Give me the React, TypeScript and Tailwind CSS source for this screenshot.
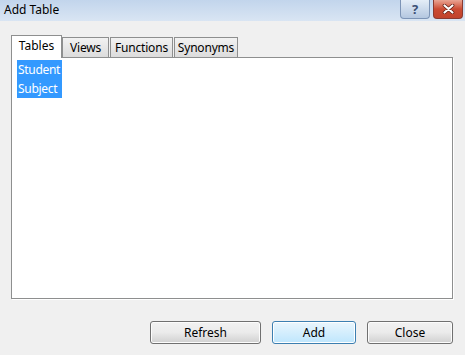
const font = { fontFamily: '"Noto Sans", "Open Sans", sans-serif' };

function TitleBar() {
  return (
    <div className="flex h-[21px] items-start justify-between bg-gradient-to-b from-[#c2d5ec] to-[#d9e5f3]">
      <div className="pl-[4px] pt-[3px] text-[12px] leading-[14px] text-black">Add Table</div>
      <div className="flex gap-[3px] pr-[2px]">
        <div className="flex h-[19px] w-[30px] items-center justify-center rounded-b-[4px] border border-t-0 border-[#7d94b6] bg-gradient-to-b from-[#e4edf7] to-[#b4c7e0] text-[13px] font-bold leading-none text-[#3b4f74]">
          ?
        </div>
        <div className="flex h-[19px] w-[30px] items-center justify-center rounded-b-[4px] border border-t-0 border-[#8a3a30] bg-gradient-to-b from-[#e9a493] via-[#cb4b33] to-[#c1432c]">
          <svg width="13" height="10" viewBox="0 0 13 10">
            <path d="M2.5 1.5 L10.5 8.5 M10.5 1.5 L2.5 8.5" stroke="#5a1a10" strokeWidth="3.6" strokeLinecap="round" />
            <path d="M2.5 1.5 L10.5 8.5 M10.5 1.5 L2.5 8.5" stroke="#ffffff" strokeWidth="2.2" strokeLinecap="round" />
          </svg>
        </div>
      </div>
    </div>
  );
}

function Tab({ label, active, w }: { label: string; active?: boolean; w: string }) {
  if (active) {
    return (
      <div
        className={`relative z-10 -mb-px flex h-[23px] ${w} items-start justify-center border border-b-0 border-[#8e8f8f] bg-white pt-[2px] text-[12px] leading-[16px]`}
      >
        {label}
      </div>
    );
  }
  return (
    <div
      className={`flex h-[20px] ${w} items-start justify-center border border-b-0 border-[#8e8f8f] bg-gradient-to-b from-[#f2f2f2] to-[#dcdcdc] pt-[2px] text-[12px] leading-[16px] tracking-[-0.2px]`}
    >
      {label}
    </div>
  );
}

function Btn({ label, primary, w }: { label: string; primary?: boolean; w: string }) {
  return (
    <button
      className={`h-[23px] ${w} rounded-[3px] border text-[12px] leading-none ${
        primary
          ? "border-[#3c7fb1] bg-gradient-to-b from-[#eaf6fd] to-[#bee6fd] shadow-[inset_0_0_0_1px_#ffffff]"
          : "border-[#707070] bg-gradient-to-b from-[#f2f2f2] via-[#ebebeb] to-[#d0d0d0] shadow-[inset_0_0_0_1px_#fcfcfc]"
      }`}
    >
      {label}
    </button>
  );
}

export default function App() {
  return (
    <div className="h-[355px] w-[465px] overflow-hidden bg-[#f0f0f0] text-black" style={font}>
      <TitleBar />
      <div className="px-[11px] pt-[13px]">
        <div className="flex h-[23px] items-end">
          <Tab label="Tables" active w="w-[51px]" />
          <Tab label="Views" w="w-[47px]" />
          <div className="w-px" />
          <Tab label="Functions" w="w-[63px]" />
          <div className="w-px" />
          <Tab label="Synonyms" w="w-[64px]" />
        </div>
        <div className="h-[242px] w-[442px] border border-[#8e8f8f] bg-white shadow-[1px_1px_0_#ffffff]">
          <div className="flex flex-col items-start pl-[5px] pt-[2px]">
            <div className="flex h-[19px] w-[45px] items-center bg-[#3399ff] pl-[1px] text-[12px] tracking-[-0.3px] text-white">
              Student
            </div>
            <div className="flex h-[19px] w-[45px] items-center bg-[#3399ff] pl-[1px] text-[12px] tracking-[-0.3px] text-white">
              Subject
            </div>
          </div>
        </div>
      </div>
      <div className="mt-[22px] flex justify-end gap-[11px] pr-[12px]">
        <Btn label="Refresh" w="w-[111px]" />
        <Btn label="Add" primary w="w-[84px]" />
        <Btn label="Close" w="w-[86px]" />
      </div>
    </div>
  );
}
